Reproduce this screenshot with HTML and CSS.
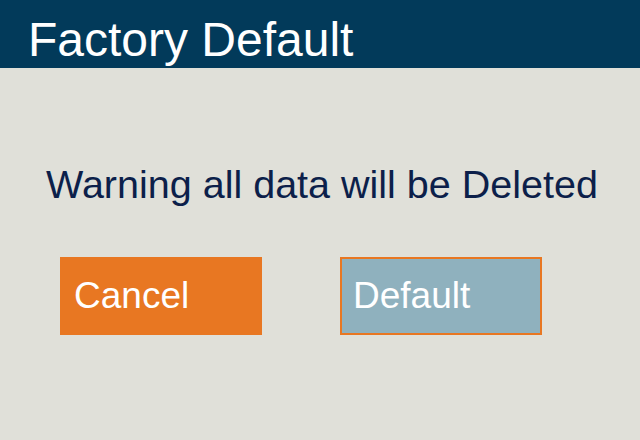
FILE: index.html
```html
<!DOCTYPE html>
<html lang="en">
<head>
    <meta charset="UTF-8">
    <title>Factory Default</title>
    <link rel="stylesheet" href="styles.css">
</head>
<body>
    <div class="header">
        <h1>Factory Default</h1>
    </div>

    <div class="content">
        <p class="warning">Warning all data will be Deleted</p>

        <div class="buttons">
            <button class="btn btn-cancel">Cancel</button>
            <button class="btn btn-default">Default</button>
        </div>
    </div>
</body>
</html>
```

FILE: styles.css
```css
body {
    margin: 0;
    width: 640px;
    height: 440px;
    background-color: #e0e0d9;
    font-family: "Liberation Sans", Arial, sans-serif;
    overflow: hidden;
}

.header {
    height: 68px;
    background-color: #023a5a;
    padding-left: 28px;
    box-sizing: border-box;
}

.header h1 {
    margin: 0;
    color: #ffffff;
    font-size: 48px;
    font-weight: normal;
    line-height: 80px;
}

.content {
    padding-top: 92px;
}

.warning {
    margin: 0;
    padding-left: 4px;
    text-align: center;
    color: #0c1f4a;
    font-size: 39.5px;
    line-height: 48px;
}

.buttons {
    display: flex;
    gap: 78px;
    padding-left: 60px;
    margin-top: 49px;
}

.btn {
    width: 202px;
    height: 78px;
    border: none;
    margin: 0;
    padding: 0 0 0 14px;
    text-align: left;
    color: #ffffff;
    font-family: "Liberation Sans", Arial, sans-serif;
    font-size: 37px;
}

.btn-cancel {
    background-color: #e87722;
}

.btn-default {
    background-color: #8fb1be;
    border: 2px solid #e87722;
    padding-left: 11px;
}
```
